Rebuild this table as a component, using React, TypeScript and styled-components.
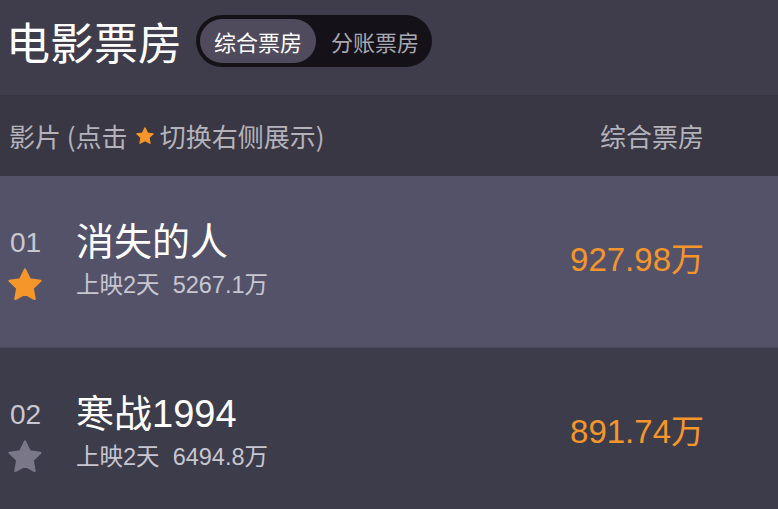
import React from "react";
import styled, { createGlobalStyle } from "styled-components";

const Global = createGlobalStyle`
  html, body { margin: 0; padding: 0; background: #3f3d4b; }
  body { font-family: "Liberation Sans", "Noto Sans CJK SC", sans-serif; overflow: hidden; }
`;

const Page = styled.div`
  width: 778px;
  background: #3f3d4b;
`;

const TopBar = styled.div`
  height: 95px;
  box-sizing: border-box;
  padding: 15px 0 0 6px;
  display: flex;
  align-items: flex-start;
  gap: 14px;
`;

const Title = styled.h1`
  margin: 0;
  font-weight: 400;
  font-size: 44px;
  line-height: 52px;
  color: #ffffff;
  font-family: "Noto Sans CJK SC", sans-serif;
`;

const Toggle = styled.div`
  height: 52px;
  box-sizing: border-box;
  padding: 4px 13px 4px 4px;
  border-radius: 26px;
  background: #141218;
  display: flex;
  align-items: center;
  gap: 15px;
`;

const ToggleItem = styled.div<{ $active?: boolean }>`
  height: 44px;
  box-sizing: border-box;
  border-radius: 22px;
  display: flex;
  align-items: center;
  font-size: 22px;
  font-family: "Noto Sans CJK SC", sans-serif;
  color: ${(p) => (p.$active ? "#ffffff" : "#a9a7b0")};
  background: ${(p) => (p.$active ? "#4f4b5c" : "transparent")};
  padding: 0 ${(p) => (p.$active ? "14px" : "0")};
`;

const HeaderRow = styled.div`
  height: 81px;
  box-sizing: border-box;
  padding: 0 74px 0 9px;
  background: #393743;
  display: flex;
  align-items: center;
  justify-content: space-between;
  font-size: 26px;
  color: #b4b2bb;
  font-family: "Noto Sans CJK SC", sans-serif;
`;

const HeaderLeft = styled.div`
  display: flex;
  align-items: center;
  white-space: pre;
`;

const HeaderStar = styled.span`
  display: inline-flex;
  margin: 0 5px 0 7px;
`;

const Row = styled.div<{ $active?: boolean }>`
  height: 172px;
  box-sizing: border-box;
  padding: 4px 74px 0 10px;
  display: flex;
  align-items: center;
  background: ${(p) => (p.$active ? "#545269" : "#3d3c4a")};
  border-bottom: 1px solid #4a4858;
`;

const RankCol = styled.div`
  width: 66px;
  display: flex;
  flex-direction: column;
`;

const Rank = styled.div`
  height: 43px;
  line-height: 43px;
  font-size: 28px;
  color: #c9c7d0;
`;

const StarBox = styled.div`
  height: 43px;
  display: flex;
  align-items: center;
  margin-left: -4px;
`;

const Info = styled.div`
  flex: 1;
  display: flex;
  flex-direction: column;
`;

const MovieName = styled.div`
  height: 43px;
  line-height: 43px;
  font-size: 38px;
  color: #ffffff;
`;

const Sub = styled.div`
  height: 43px;
  line-height: 43px;
  font-size: 23.5px;
  color: #c8c6d1;
  white-space: pre;
`;

const Value = styled.div`
  font-size: 33px;
  color: #f5962a;
  margin-bottom: 14px;
`;

const Star = ({ size, color }: { size: number; color: string }) => (
  <svg width={size} height={size} viewBox="0 0 24 24">
    <polygon
      points="12,2.2 15,8.4 21.8,9.3 16.9,14 18.1,20.8 12,17.6 5.9,20.8 7.1,14 2.2,9.3 9,8.4"
      fill={color}
      stroke={color}
      strokeWidth="1.4"
      strokeLinejoin="round"
    />
  </svg>
);

const movies = [
  { rank: "01", name: "消失的人", days: "上映2天", total: "5267.1万", value: "927.98万", active: true },
  { rank: "02", name: "寒战1994", days: "上映2天", total: "6494.8万", value: "891.74万", active: false },
];

export default function App() {
  return (
    <Page>
      <Global />
      <TopBar>
        <Title>电影票房</Title>
        <Toggle>
          <ToggleItem $active>综合票房</ToggleItem>
          <ToggleItem>分账票房</ToggleItem>
        </Toggle>
      </TopBar>
      <HeaderRow>
        <HeaderLeft>
          影片 (点击
          <HeaderStar>
            <Star size={20} color="#f5962a" />
          </HeaderStar>
          切换右侧展示)
        </HeaderLeft>
        <div>综合票房</div>
      </HeaderRow>
      {movies.map((m) => (
        <Row key={m.rank} $active={m.active}>
          <RankCol>
            <Rank>{m.rank}</Rank>
            <StarBox>
              <Star size={38} color={m.active ? "#f5962a" : "#7a7888"} />
            </StarBox>
          </RankCol>
          <Info>
            <MovieName>{m.name}</MovieName>
            <Sub>{m.days}  {m.total}</Sub>
          </Info>
          <Value>{m.value}</Value>
        </Row>
      ))}
    </Page>
  );
}
